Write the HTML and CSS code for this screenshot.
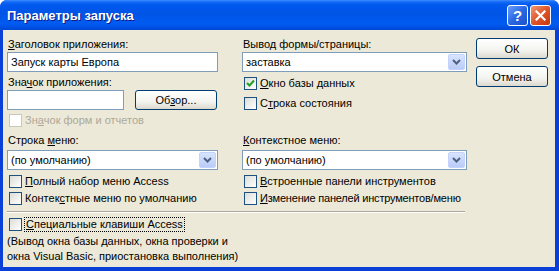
FILE: index.html
```html
<!DOCTYPE html>
<html lang="ru">
<head>
  <meta charset="UTF-8" />
  <meta name="viewport" content="width=device-width, initial-scale=1.0"/>
  <title>Параметры запуска</title>
  <link rel="stylesheet" href="styles.css">
</head>
<body>
  <div class="window">
    <div class="titlebar">
      <span class="title">Параметры запуска</span>
      <div class="title-buttons">
        <span class="tbtn help">?</span>
        <span class="tbtn close">
          <svg width="11" height="11" viewBox="0 0 11 11"><path d="M1.5 1.5 L9.5 9.5 M9.5 1.5 L1.5 9.5" stroke="#fff" stroke-width="2.2" stroke-linecap="square"/></svg>
        </span>
      </div>
    </div>

    <div class="client">
      <div class="main">
        <!-- top block -->
        <div class="section">
          <div class="col">
            <span class="lbl"><u>З</u>аголовок приложения:</span>
            <div class="field">Запуск карты Европа</div>
            <span class="lbl gap3">Зна<u>ч</u>ок приложения:</span>
            <div class="icon-row">
              <div class="field icon-field"></div>
              <button class="btn browse">Об<u>з</u>ор...</button>
            </div>
            <div class="check disabled gap3"><span class="box"></span>Зн<u>а</u>чок форм и отчетов</div>
          </div>
          <div class="col">
            <span class="lbl">Вывод формы/страницы:</span>
            <div class="field select">
              <span>заставка</span>
              <span class="arrow"><svg width="9" height="6" viewBox="0 0 9 6"><path d="M1 1 L4.5 4.5 L8 1" fill="none" stroke="#4D6185" stroke-width="2"/></svg></span>
            </div>
            <div class="check gap4"><span class="box checked"><svg width="9" height="9" viewBox="0 0 9 9"><path d="M1 4 L3.5 6.5 L8 1.5" fill="none" stroke="#21A121" stroke-width="2"/></svg></span><u>О</u>кно базы данных</div>
            <div class="check gap5"><span class="box"></span>С<u>т</u>рока состояния</div>
          </div>
        </div>

        <!-- menu block -->
        <div class="section menus">
          <div class="col">
            <span class="lbl">Строка <u>м</u>еню:</span>
            <div class="field select gap2">
              <span>(по умолчанию)</span>
              <span class="arrow"><svg width="9" height="6" viewBox="0 0 9 6"><path d="M1 1 L4.5 4.5 L8 1" fill="none" stroke="#4D6185" stroke-width="2"/></svg></span>
            </div>
            <div class="check gap4"><span class="box"></span><u>П</u>олный набор меню Access</div>
            <div class="check gap2"><span class="box"></span>Контек<u>с</u>тные меню по умолчанию</div>
          </div>
          <div class="col">
            <span class="lbl"><u>К</u>онтекстное меню:</span>
            <div class="field select gap2">
              <span>(по умолчанию)</span>
              <span class="arrow"><svg width="9" height="6" viewBox="0 0 9 6"><path d="M1 1 L4.5 4.5 L8 1" fill="none" stroke="#4D6185" stroke-width="2"/></svg></span>
            </div>
            <div class="check gap4"><span class="box"></span><u>В</u>строенные панели инструментов</div>
            <div class="check gap2"><span class="box"></span><span class="tight"><u>И</u>зменение панелей инструментов/меню</span></div>
          </div>
        </div>

        <div class="sep"></div>

        <div class="check special"><span class="box"></span><span class="focus"><u>С</u>пециальные клавиши Access</span></div>
        <p class="note">(Вывод окна базы данных, окна проверки и<br>окна Visual Basic, приостановка выполнения)</p>
      </div>

      <div class="buttons">
        <button class="btn">ОК</button>
        <button class="btn">Отмена</button>
      </div>
    </div>
  </div>
</body>
</html>
```

FILE: styles.css
```css
body {
  margin: 0;
  font: 11px "Liberation Sans", Arial, sans-serif;
  color: #000;
}

.window {
  width: 559px;
  height: 271px;
  display: flex;
  flex-direction: column;
  background: #0A3FD8;
  border-radius: 7px 7px 0 0;
  overflow: hidden;
}

.titlebar {
  height: 30px;
  flex: none;
  display: flex;
  align-items: center;
  padding: 0 8px 0 7px;
  background: linear-gradient(#3D8DFF 0, #1269F5 2px, #0058EE 5px, #0055E5 45%, #005BF2 80%, #0048D6 100%);
}

.title {
  flex: 1;
  color: #fff;
  font: bold 13px "Liberation Sans", Arial, sans-serif;
  text-shadow: 1px 1px #0F1B89;
  margin-top: 1px;
}

.title-buttons {
  display: flex;
  gap: 2px;
}

.tbtn {
  width: 21px;
  height: 21px;
  box-sizing: border-box;
  border: 1px solid #fff;
  border-radius: 3px;
  display: flex;
  align-items: center;
  justify-content: center;
}

.help {
  background: linear-gradient(135deg, #6A9EFB, #2B68E4 50%, #1C50CC);
  color: #fff;
  font: bold 15px "Liberation Sans", Arial, sans-serif;
}

.close {
  background: linear-gradient(135deg, #EE9A78, #E0552A 50%, #C5360F);
}

.client {
  flex: 1;
  margin: 0 4px 4px 3px;
  background: #ECE9D8;
  display: flex;
  padding: 7px 0 0 4px;
}

.main {
  width: 460px;
  display: flex;
  flex-direction: column;
}

.section {
  display: grid;
  grid-template-columns: 211px 225px;
  column-gap: 24px;
  align-items: start;
}

.menus { margin-top: 5px; }

.col {
  display: flex;
  flex-direction: column;
}

.lbl {
  height: 15px;
  line-height: 15px;
  padding-left: 1px;
}

.gap2 { margin-top: 2px; }
.gap3 { margin-top: 3px; }
.gap4 { margin-top: 4px; }
.gap5 { margin-top: 5px; }

.field {
  height: 20px;
  box-sizing: border-box;
  border: 1px solid #7F9DB9;
  background: #fff;
  line-height: 18px;
  padding-left: 3px;
}

.select {
  display: flex;
  justify-content: space-between;
  padding-right: 1px;
}

.arrow {
  width: 17px;
  height: 16px;
  margin-top: 1px;
  box-sizing: border-box;
  border: 1px solid #C3D3FD;
  border-radius: 2px;
  background: linear-gradient(#D9E4FD, #B9CCF8);
  display: flex;
  align-items: center;
  justify-content: center;
}

.icon-row {
  display: flex;
  gap: 11px;
  height: 20px;
}

.icon-field { width: 117px; }

.btn {
  height: 21px;
  box-sizing: border-box;
  border: 1px solid #003C74;
  border-radius: 3px;
  background: linear-gradient(#FFFFFF, #F3F3EF 60%, #DCD8CD);
  font: 11px "Liberation Sans", Arial, sans-serif;
  color: #000;
  padding: 0;
}

.browse {
  width: 82px;
  height: 20px;
}

.check {
  display: flex;
  align-items: center;
  height: 15px;
  line-height: 15px;
  white-space: nowrap;
}

.tight { letter-spacing: -0.2px; }

.box {
  width: 13px;
  height: 13px;
  flex: none;
  box-sizing: border-box;
  border: 1px solid #1C5180;
  background: linear-gradient(135deg, #DCDCD7, #FFFFFF);
  margin: 0 3px 0 2px;
  display: flex;
  align-items: center;
  justify-content: center;
}

.disabled { color: #ACA899; }
.disabled .box {
  border-color: #CAC8BB;
  background: #fff;
}

.sep {
  width: 458px;
  margin-top: 5px;
  border-top: 1px solid #ACA899;
  border-bottom: 1px solid #fff;
}

.special { margin-top: 4px; }

.focus {
  outline: 1px dotted #000;
  line-height: 13px;
  padding: 0 1px;
}

.note {
  margin: 2px 0 0;
  line-height: 15px;
}

.buttons {
  margin-left: 9px;
  padding-top: 1px;
  display: flex;
  flex-direction: column;
  gap: 7px;
}

.buttons .btn { width: 72px; }
```
